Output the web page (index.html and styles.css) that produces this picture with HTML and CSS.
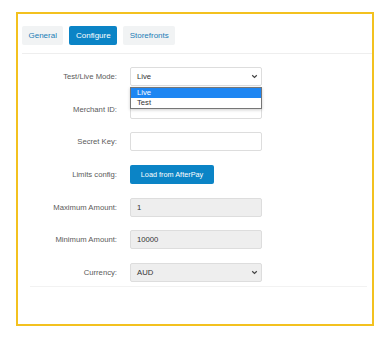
FILE: index.html
```html
<!DOCTYPE html>
<html lang="en">
<head>
   <meta charset="UTF-8">
   <title>AfterPay - Configure</title>
   <link rel="stylesheet" href="styles.css">
</head>
<body>
    <div class="panel">
        <!-- Tabs -->
        <div class="tabs">
            <div class="tab">General</div>
            <div class="tab active">Configure</div>
            <div class="tab">Storefronts</div>
        </div>

        <div class="form">
            <div class="label">Test/Live Mode:</div>
            <div class="field">
                <div class="control select">
                    <span>Live</span>
                    <svg class="chevron" width="7" height="5" viewBox="0 0 7 5"><path d="M1.2 1.2 L3.5 3.4 L5.8 1.2" fill="none" stroke="#444" stroke-width="1.2"/></svg>
                </div>
                <div class="dropdown">
                    <div class="option selected">Live</div>
                    <div class="option">Test</div>
                </div>
            </div>

            <div class="label">Merchant ID:</div>
            <div class="field"><div class="control"></div></div>

            <div class="label">Secret Key:</div>
            <div class="field"><div class="control"></div></div>

            <div class="label">Limits config:</div>
            <div class="field"><button class="btn">Load from AfterPay</button></div>

            <div class="label">Maximum Amount:</div>
            <div class="field"><div class="control disabled">1</div></div>

            <div class="label">Minimum Amount:</div>
            <div class="field"><div class="control disabled">10000</div></div>

            <div class="label">Currency:</div>
            <div class="field">
                <div class="control select disabled">
                    <span>AUD</span>
                    <svg class="chevron" width="7" height="5" viewBox="0 0 7 5"><path d="M1.2 1.2 L3.5 3.4 L5.8 1.2" fill="none" stroke="#444" stroke-width="1.2"/></svg>
                </div>
            </div>
        </div>
        <div class="footer-line"></div>
    </div>
</body>
</html>
```

FILE: styles.css
```css
body {
    margin: 0;
    background: #fff;
    font-family: "Liberation Sans", Arial, sans-serif;
    font-size: 7.7px;
}

/* Yellow frame */
.panel {
    margin: 12px 0 0 16px;
    width: 358px;
    height: 314px;
    box-sizing: border-box;
    border: 2px solid #f3c11f;
    padding: 12px 0 0 4px;
}

/* Tabs */
.tabs {
    display: flex;
    gap: 6px;
    padding-bottom: 8px;
    border-bottom: 1px solid #eeeeee;
}

.tab {
    height: 19px;
    padding: 0 6.5px;
    display: flex;
    align-items: center;
    background: #f1f3f4;
    color: #1b7db6;
    border-radius: 2px;
    font-size: 8px;
}

.tab.active {
    background: #0b84c6;
    color: #fff;
}

/* Form rows */
.form {
    display: grid;
    grid-template-columns: 95px 132px;
    column-gap: 13px;
    row-gap: 13.7px;
    margin-top: 13px;
}

.label {
    color: #5a5a5a;
    text-align: right;
    display: flex;
    align-items: center;
    justify-content: flex-end;
    height: 19px;
}

.field {
    position: relative;
}

.control {
    height: 19px;
    box-sizing: border-box;
    border: 1px solid #dddddd;
    border-radius: 2px;
    background: #fff;
    color: #333;
    padding: 0 6px;
    display: flex;
    align-items: center;
}

.control.disabled {
    background: #eeeeee;
}

.select {
    justify-content: space-between;
    padding-right: 3px;
}

.chevron {
    display: block;
}

/* Open select list */
.dropdown {
    position: absolute;
    top: 20px;
    left: 0;
    width: 132px;
    box-sizing: border-box;
    border: 1px solid #767676;
    background: #fff;
    box-shadow: 0 1px 3px rgba(0, 0, 0, 0.2);
    z-index: 2;
}

.option {
    height: 10px;
    line-height: 10px;
    padding: 0 6px;
    color: #333;
}

.option.selected {
    background: #1e86f2;
    color: #fff;
}

/* Load from AfterPay button */
.btn {
    height: 19px;
    width: 84px;
    border: none;
    border-radius: 2px;
    background: #0b84c6;
    color: #fff;
    font-family: "Liberation Sans", Arial, sans-serif;
    font-size: 7.3px;
    padding: 0;
    cursor: pointer;
}

.footer-line {
    margin: 4px 5px 0 8px;
    border-top: 1px solid #f2f2f2;
}
```
